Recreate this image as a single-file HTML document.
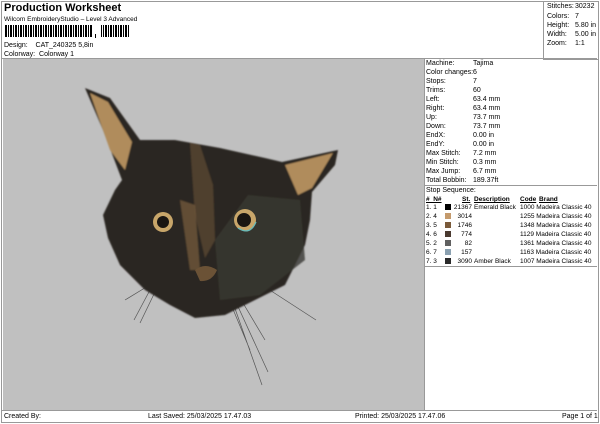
<!DOCTYPE html>
<html><head><style>
body{margin:0;width:600px;height:424px;background:#fff;font-family:"Liberation Sans",sans-serif;color:#000;position:relative;overflow:hidden}
.a{position:absolute;white-space:nowrap;font-size:7px;line-height:9px}
.s{font-size:6.5px}
.box{position:absolute;border:1px solid #999}
</style></head><body>
<div class="box" style="left:1px;top:1px;width:596px;height:420px"></div>
<div class="box" style="left:543px;top:1px;width:54px;height:57px"></div>
<div style="position:absolute;left:2px;top:58px;width:595px;height:1px;background:#999"></div>
<div style="position:absolute;left:3px;top:59px;width:421px;height:351px;background:#c0c0c0"></div>
<div style="position:absolute;left:424px;top:59px;width:1px;height:352px;background:#999"></div>
<div style="position:absolute;left:2px;top:410px;width:595px;height:1px;background:#999"></div>
<div class="a" style="left:4px;top:2px;font-size:11px;line-height:13px;font-weight:bold">Production Worksheet</div>
<div class="a" style="left:4px;top:15px;font-size:6.5px">Wilcom EmbroideryStudio – Level 3 Advanced</div>
<div style="position:absolute;left:5px;top:25px;width:124px;height:12px;background:repeating-linear-gradient(90deg,#000 0 2px,#fff 2px 3px,#000 3px 4px,#fff 4px 5px)"></div>
<div style="position:absolute;left:93px;top:25px;width:8px;height:12px;background:#fff"></div>
<div style="position:absolute;left:95px;top:34px;width:1px;height:4px;background:#000"></div>
<div class="a" style="left:4px;top:41px">Design:&nbsp;&nbsp;&nbsp;&nbsp;CAT_240325 5,8in</div>
<div class="a" style="left:4px;top:50px">Colorway:&nbsp; Colorway 1</div>
<div class="a" style="left:547px;top:2px">Stitches:</div><div class="a" style="left:575px;top:2px">30232</div>
<div class="a" style="left:547px;top:12px">Colors:</div><div class="a" style="left:575px;top:12px">7</div>
<div class="a" style="left:547px;top:21px">Height:</div><div class="a" style="left:575px;top:21px">5.80 in</div>
<div class="a" style="left:547px;top:30px">Width:</div><div class="a" style="left:575px;top:30px">5.00 in</div>
<div class="a" style="left:547px;top:39px">Zoom:</div><div class="a" style="left:575px;top:39px">1:1</div>
<div style="position:absolute;left:425px;top:185px;width:172px;height:1px;background:#999"></div>
<div style="position:absolute;left:425px;top:266px;width:172px;height:1px;background:#999"></div>
<div class="a" style="left:426px;top:59px;line-height:9px">Machine:<br>Color changes:<br>Stops:<br>Trims:<br>Left:<br>Right:<br>Up:<br>Down:<br>EndX:<br>EndY:<br>Max Stitch:<br>Min Stitch:<br>Max Jump:<br>Total Bobbin:</div>
<div class="a" style="left:473px;top:59px;line-height:9px">Tajima<br>6<br>7<br>60<br>63.4 mm<br>63.4 mm<br>73.7 mm<br>73.7 mm<br>0.00 in<br>0.00 in<br>7.2 mm<br>0.3 mm<br>6.7 mm<br>189.37ft</div>
<div class="a" style="left:426px;top:186px">Stop Sequence:</div>
<div class="a s" style="left:426px;top:195px;font-weight:bold;text-decoration:underline">#&nbsp;&nbsp;N#</div>
<div class="a s" style="left:462px;top:195px;font-weight:bold;text-decoration:underline">St.</div>
<div class="a s" style="left:474px;top:195px;font-weight:bold;text-decoration:underline">Description</div>
<div class="a s" style="left:520px;top:195px;font-weight:bold;text-decoration:underline">Code</div>
<div class="a s" style="left:539px;top:195px;font-weight:bold;text-decoration:underline">Brand</div>
<div class="a s" style="left:426px;top:203px;line-height:9px">1.&nbsp;1<br>2.&nbsp;4<br>3.&nbsp;5<br>4.&nbsp;6<br>5.&nbsp;2<br>6.&nbsp;7<br>7.&nbsp;3</div>
<div class="a s" style="left:448px;top:203px;line-height:9px;text-align:right;width:24px">21367<br>3014<br>1746<br>774<br>82<br>157<br>3090</div>
<div class="a s" style="left:474px;top:203px;line-height:9px">Emerald Black<br><br><br><br><br><br>Amber Black</div>
<div class="a s" style="left:520px;top:203px;line-height:9px">1000 Madeira Classic 40<br>1255 Madeira Classic 40<br>1348 Madeira Classic 40<br>1129 Madeira Classic 40<br>1361 Madeira Classic 40<br>1163 Madeira Classic 40<br>1007 Madeira Classic 40</div>
<div style="position:absolute;left:445px;top:204px;width:6px;height:6px;background:#000"></div>
<div style="position:absolute;left:445px;top:213px;width:6px;height:6px;background:#c49a6c"></div>
<div style="position:absolute;left:445px;top:222px;width:6px;height:6px;background:#7a5a3a"></div>
<div style="position:absolute;left:445px;top:231px;width:6px;height:6px;background:#4a3a30"></div>
<div style="position:absolute;left:445px;top:240px;width:6px;height:6px;background:#606060"></div>
<div style="position:absolute;left:445px;top:249px;width:6px;height:6px;background:#8aa0b0"></div>
<div style="position:absolute;left:445px;top:258px;width:6px;height:6px;background:#2a2a2a"></div>
<div class="a" style="left:4px;top:412px">Created By:</div>
<div class="a" style="left:148px;top:412px">Last Saved: 25/03/2025 17.47.03</div>
<div class="a" style="left:355px;top:412px">Printed: 25/03/2025 17.47.06</div>
<div class="a" style="left:562px;top:412px">Page 1 of 1</div>
<svg style="position:absolute;left:0;top:0" width="600" height="424">
<defs><filter id="f"><feGaussianBlur stdDeviation="0.8"/></filter></defs>
<g stroke="#555" stroke-width="0.7" fill="none">
<path d="M232 300 L262 385 M235 300 L268 372 M230 302 L250 350 M240 298 L265 340 M262 285 L316 320 M150 290 L134 320 M155 292 L140 323 M148 286 L125 300"/>
</g>
<g filter="url(#f)">
<path d="M85 88 L110 98 L140 140 L175 140 L220 148 L265 158 L282 162 L338 150 L335 165 L312 192 L310 220 L305 245 L285 285 L255 300 L225 315 L195 318 L170 305 L145 290 L120 265 L108 238 L103 215 L115 190 L122 180 L103 130 Z" fill="#2a2620"/>
<path d="M90 93 L108 102 L132 142 L125 170 L110 150 Z" fill="#b08c5c"/>
<path d="M285 165 L333 153 L312 188 L298 195 Z" fill="#b08c5c"/>
<path d="M190 143 L200 145 L213 185 L215 240 L205 258 L195 215 Z" fill="#5a4632" opacity="0.8"/>
<path d="M180 200 L195 205 L200 270 L190 270 Z" fill="#7a5f3e" opacity="0.7"/>
<path d="M248 195 L300 200 L305 260 L260 295 L220 300 L215 240 Z" fill="#3a3833" opacity="0.8"/>
</g>
<circle cx="163" cy="222" r="10" fill="#c8a66a"/><circle cx="163" cy="222" r="6" fill="#1a1612"/>
<circle cx="245" cy="220" r="11" fill="#c8a66a"/><circle cx="244" cy="220" r="7" fill="#1a1612"/>
<path d="M238 228 Q250 236 256 222" stroke="#6bb" stroke-width="1.2" fill="none"/>
<path d="M195 270 Q205 262 217 270 Q212 282 200 281 Z" fill="#6b5236"/>
</svg>
</body></html>
